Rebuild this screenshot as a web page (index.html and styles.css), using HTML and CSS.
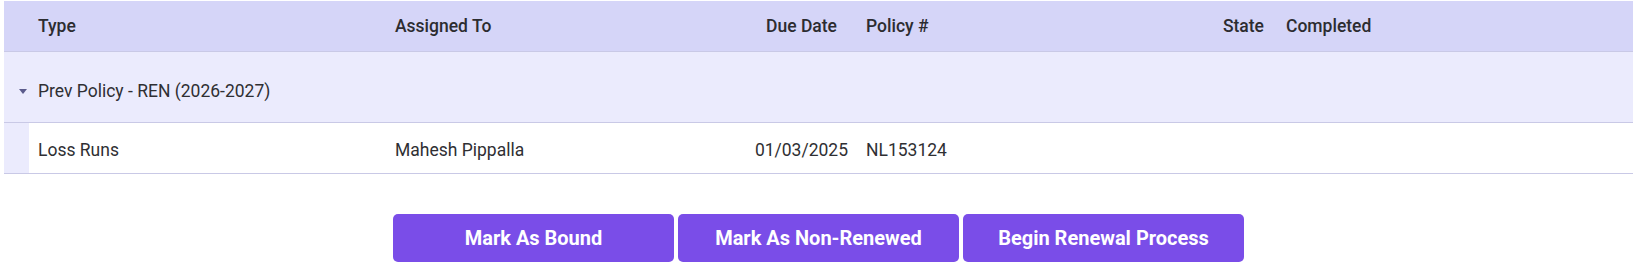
FILE: index.html
```html
<!DOCTYPE html>
<html lang="en">
<head>
<meta charset="utf-8">
<title>Policy Tasks</title>
<link rel="stylesheet" href="styles.css">
</head>
<body>
<div class="page">
  <div class="grid">
    <div class="row head">
      <div class="cell c0"></div>
      <div class="cell">Type</div>
      <div class="cell">Assigned To</div>
      <div class="cell right hdate">Due Date</div>
      <div class="cell">Policy #</div>
      <div class="cell right">State</div>
      <div class="cell">Completed</div>
      <div class="cell"></div>
    </div>
    <div class="row group">
      <div class="cell c0"><svg class="caret" width="8" height="5" viewBox="0 0 8 5"><path d="M0 0 L8 0 L4 5 Z" fill="#5b5b8c"/></svg></div>
      <div class="cell span">Prev Policy - REN (2026-2027)</div>
    </div>
    <div class="row data">
      <div class="cell c0 strip"></div>
      <div class="cell">Loss Runs</div>
      <div class="cell">Mahesh Pippalla</div>
      <div class="cell right">01/03/2025</div>
      <div class="cell">NL153124</div>
      <div class="cell right"></div>
      <div class="cell"></div>
      <div class="cell"></div>
    </div>
  </div>
  <div class="actions">
    <button class="btn">Mark As Bound</button>
    <button class="btn">Mark As Non-Renewed</button>
    <button class="btn">Begin Renewal Process</button>
  </div>
</div>
</body>
</html>
```
FILE: styles.css
```css
html, body {
  margin: 0;
  padding: 0;
  background: #ffffff;
}
body {
  font-family: Roboto, "Liberation Sans", sans-serif;
  color: #2f2f33;
  font-size: 17.5px;
}
.page {
  padding: 1px 0 0 4px;
}
.grid {
  display: flex;
  flex-direction: column;
}
.row {
  display: grid;
  grid-template-columns: 25px 357px 314px 157px 293px 123px 181px 1fr;
  align-items: center;
  border-bottom: 1px solid #c9c9e6;
}
.cell {
  padding: 0 9px;
  white-space: nowrap;
}
.c0 {
  padding: 0;
  align-self: stretch;
  display: flex;
  align-items: center;
  justify-content: center;
}
.right {
  text-align: right;
}
.head {
  height: 50px;
  background: #d5d5f8;
  font-weight: 500;
  color: #2c2c30;
}
.head .hdate {
  padding-right: 20px;
}
.head .cell:nth-child(7) {
  padding-left: 13px;
}
.group {
  height: 62px;
  background: #ebebfd;
  padding-top: 8px;
}
.group .span {
  grid-column: 2 / -1;
}
.caret {
  display: block;
  margin-left: 13px;
}
.data {
  height: 47px;
  background: #ffffff;
  padding-top: 3px;
}
.strip {
  background: #ebebfd;
  margin-top: -3px;
}
.actions {
  display: flex;
  justify-content: center;
  gap: 4px;
  margin-top: 40px;
}
.btn {
  width: 281px;
  height: 48px;
  border: none;
  border-radius: 5px;
  background: #7a4de8;
  color: #ffffff;
  font-family: Roboto, "Liberation Sans", sans-serif;
  font-weight: 700;
  font-size: 20px;
  cursor: pointer;
}
```
